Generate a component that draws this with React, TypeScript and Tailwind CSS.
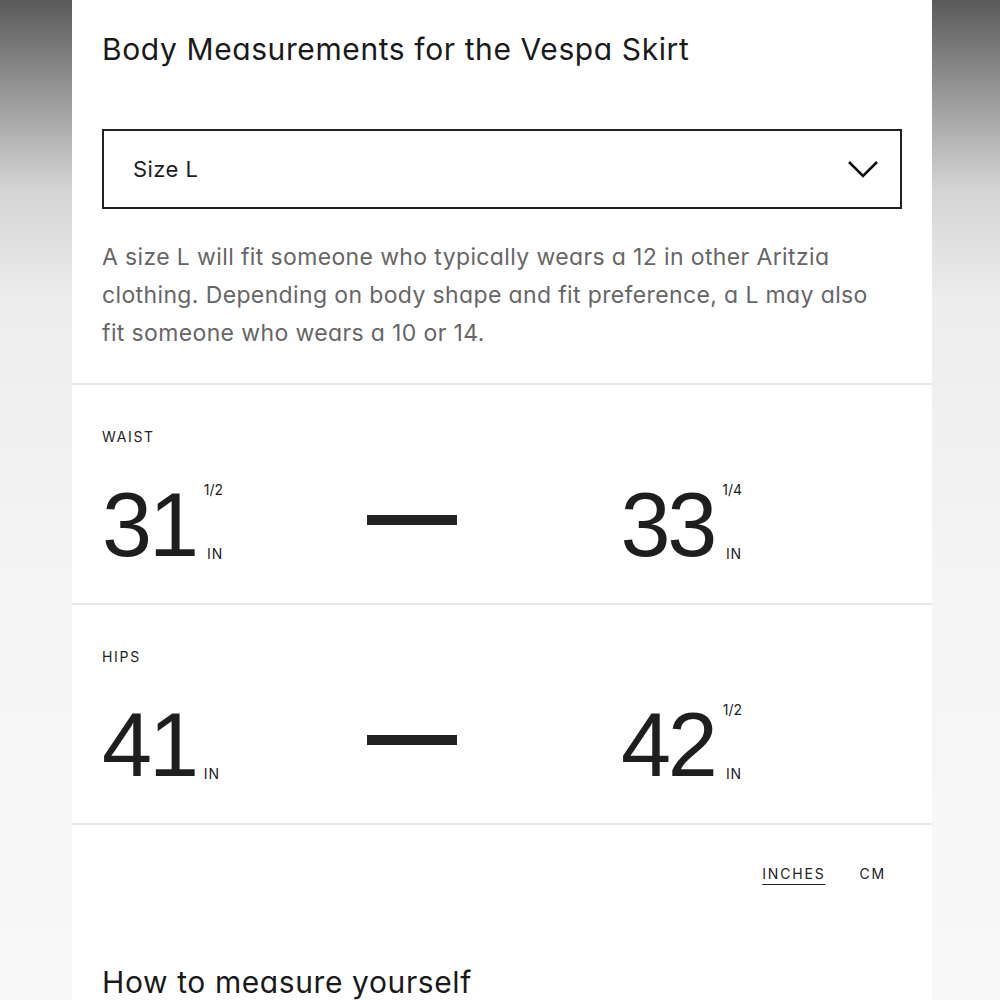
import React from 'react';

type Measure = {
  label: string;
  from: { whole: string; frac?: string };
  to: { whole: string; frac?: string };
};

const measures: Measure[] = [
  { label: 'WAIST', from: { whole: '31', frac: '1/2' }, to: { whole: '33', frac: '1/4' } },
  { label: 'HIPS', from: { whole: '41' }, to: { whole: '42', frac: '1/2' } },
];

const sans = "font-['Inter','Lato',sans-serif] [font-feature-settings:'cv11']";

const Value = ({ whole, frac }: { whole: string; frac?: string }) => (
  <div className="flex items-stretch">
    <span className="font-['Liberation_Sans','Arial',sans-serif] text-[90px] leading-[92px] tracking-[-0.035em] text-[#1e1e1e]">
      {whole}
    </span>
    <div className={`${sans} ml-[8px] flex flex-col items-end justify-between pt-[2px] pb-[8px] text-[14px] leading-[18px] text-[#222]`}>
      <span>{frac ?? '\u00a0'}</span>
      <span className="tracking-[0.06em]">IN</span>
    </div>
  </div>
);

const MeasureRow = ({ m }: { m: Measure }) => (
  <section className="border-b-2 border-[#e8e8e8] px-[30px] pt-[42px] pb-[32px]">
    <div className={`${sans} text-[14px] leading-[20px] tracking-[0.12em] text-[#222]`}>{m.label}</div>
    <div className="mt-[32px] grid grid-cols-[265px_90px_285px] items-center">
      <Value {...m.from} />
      <div className="mb-[10px] h-[10px] w-[90px] bg-[#222]" />
      <div className="flex justify-end">
        <Value {...m.to} />
      </div>
    </div>
  </section>
);

export default function App() {
  return (
    <div className="flex h-[1000px] w-full justify-center overflow-hidden pl-[4px] bg-[linear-gradient(to_bottom,#5a5a5a_0px,#9c9c9c_100px,#d4d4d4_190px,#ededed_300px,#f5f5f5_600px,#f8f8f8_1000px)]">
      <div className={`${sans} w-[860px] bg-white`}>
        <div className="border-b-2 border-[#e8e8e8] px-[30px] pt-[31px] pb-[31px]">
          <h1 className="text-[30px] leading-[36px] font-normal tracking-[0.02em] text-[#1a1a1a]">
            Body Measurements for the Vespa Skirt
          </h1>
          <button className="mt-[62px] flex h-[80px] w-full items-center justify-between border-2 border-[#222] pr-[21px] pl-[29px] text-left">
            <span className="text-[22px] tracking-[0.02em] text-[#1e1e1e]">Size L</span>
            <svg width="32" height="18" viewBox="0 0 32 18" fill="none">
              <polyline points="2,2 16,16 30,2" stroke="#111" strokeWidth="2.6" />
            </svg>
          </button>
          <p className="mt-[29px] max-w-[792px] text-[23px] leading-[38px] tracking-[0.016em] text-[#666]">
            A size L will fit someone who typically wears a 12 in other Aritzia clothing. Depending on body shape
            and fit preference, a L may also fit someone who wears a 10 or 14.
          </p>
        </div>

        {measures.map(m => (
          <MeasureRow key={m.label} m={m} />
        ))}

        <div className="flex justify-end gap-[34px] pt-[39px] pr-[46px] text-[14px] leading-[20px] tracking-[0.13em] text-[#222]">
          <span className="underline decoration-1 underline-offset-[5px]">INCHES</span>
          <span>CM</span>
        </div>

        <h2 className="mt-[80px] px-[30px] text-[30px] leading-[36px] tracking-[0.02em] text-[#1a1a1a]">
          How to measure yourself
        </h2>
      </div>
    </div>
  );
}
